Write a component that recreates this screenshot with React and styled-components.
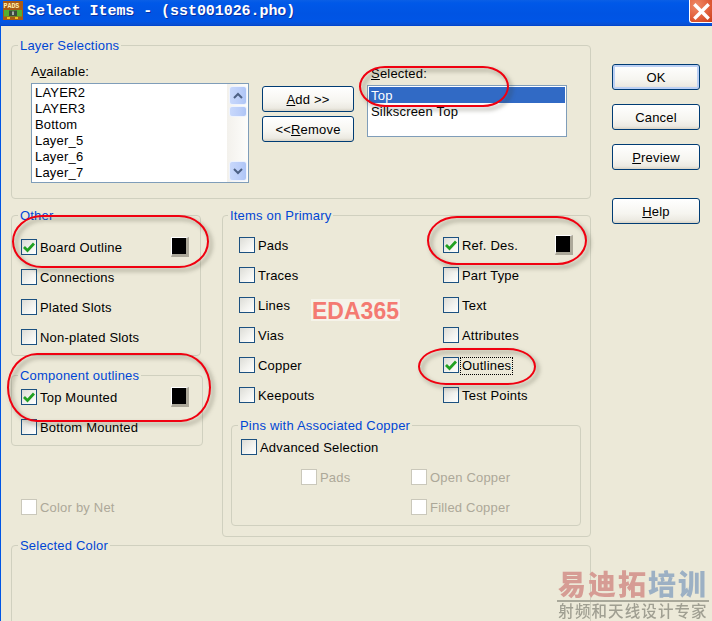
import React from "react";
import styled, { createGlobalStyle } from "styled-components";

const Global = createGlobalStyle`
  html, body { margin: 0; padding: 0; background: #ECE9D8; }
  body { font-family: "Liberation Sans", Tahoma, sans-serif; font-size: 13px; letter-spacing: 0.2px; color: #000; }
`;

const Page = styled.div`
  position: relative;
  width: 712px;
  height: 621px;
  overflow: hidden;
  background: #ECE9D8;
`;

const TitleBar = styled.div`
  display: flex;
  align-items: flex-start;
  height: 26px;
  box-sizing: border-box;
  padding-left: 3px;
  border-bottom: 1px solid #0046D0;
  background: linear-gradient(180deg, #0A5FE6 0%, #0058E8 12%, #0054E3 55%, #0055E6 85%, #0A4FD0 100%);
`;

const AppIcon = styled.svg`
  width: 20px;
  height: 19px;
  margin-top: 1px;
  flex: none;
`;

const TitleText = styled.div`
  margin: 3px 0 0 4px;
  font-family: "Liberation Mono", "Courier New", monospace;
  font-weight: 700;
  font-size: 15px;
  letter-spacing: -0.06px;
  line-height: 17px;
  color: #fff;
  white-space: pre;
  text-shadow: 1px 1px 0 #0A2FA0;
`;

const CloseButton = styled.div`
  margin-left: auto;
  width: 23px;
  height: 23px;
  box-sizing: border-box;
  border: 1px solid #fff;
  border-top: 0;
  border-right: 0;
  border-radius: 0 0 0 3px;
  background: radial-gradient(circle at 30% 25%, #EE8A68 0%, #E2603C 55%, #C83C18 100%);
  display: flex;
  align-items: center;
  justify-content: center;
`;

const Body = styled.div`
  display: flex;
  gap: 21px;
  box-sizing: border-box;
  height: 595px;
  padding: 19px 0 0 10px;
  border-left: 1px solid #0055E5;
`;

const MainColumn = styled.div`
  width: 580px;
  flex: none;
`;

const Group = styled.div`
  position: relative;
  box-sizing: border-box;
  width: ${(p) => p.$width || "auto"};
  height: ${(p) => p.$height || "auto"};
  margin-top: ${(p) => p.$top || 0};
  padding: ${(p) => p.$padding || 0};
  border: 1px solid #D0D0BF;
  border-radius: 4px;
`;

const Legend = styled.div`
  position: absolute;
  top: -7px;
  left: ${(p) => p.$left || "6px"};
  padding: 0 2px;
  background: #ECE9D8;
  color: #0046D5;
  line-height: 14px;
  white-space: nowrap;
`;

const LayerRow = styled.div`
  display: flex;
  align-items: flex-start;
`;

const FieldColumn = styled.div`
  display: flex;
  flex-direction: column;
  margin: ${(p) => p.$margin || 0};
`;

const FieldLabel = styled.div`
  line-height: 14px;
  margin: 1px 0 4px;
  padding-left: ${(p) => p.$indent || 0};
`;

const ListBox = styled.div`
  display: flex;
  box-sizing: border-box;
  width: ${(p) => p.$width};
  height: ${(p) => p.$height};
  border: 1px solid #7F9DB9;
  background: #fff;
`;

const ListItems = styled.div`
  flex: 1;
  padding: ${(p) => p.$padding || 0};
`;

const ListItem = styled.div`
  height: 16px;
  line-height: 18px;
  padding-left: ${(p) => p.$indent || "3px"};
  background: ${(p) => (p.$selected ? "#316AC5" : "transparent")};
  color: ${(p) => (p.$selected ? "#fff" : "#000")};
  white-space: nowrap;
`;

const ScrollTrack = styled.div`
  display: flex;
  flex-direction: column;
  align-items: center;
  width: 21px;
  padding: 2px 0 1px;
  box-sizing: border-box;
  background: linear-gradient(90deg, #F3F1EC 0%, #FDFDFB 100%);
`;

const ScrollPart = styled.div`
  display: flex;
  align-items: center;
  justify-content: center;
  width: 18px;
  height: ${(p) => p.$height};
  margin-top: ${(p) => p.$top || 0};
  box-sizing: border-box;
  border: 1px solid #EEF3FE;
  border-radius: 3px;
  background: linear-gradient(90deg, #C8D8FB 0%, #BBCEF9 60%, #AEC5F6 100%);
`;

const PushColumn = styled.div`
  display: flex;
  flex-direction: column;
  gap: 4px;
  margin: 22px 0 0 13px;
`;

const PushButton = styled.div`
  display: flex;
  align-items: center;
  justify-content: center;
  box-sizing: border-box;
  width: ${(p) => p.$width || "88px"};
  height: 26px;
  margin-top: ${(p) => p.$top || 0};
  padding-top: 2px;
  border: 1px solid #003C74;
  border-radius: 3px;
  background: linear-gradient(180deg, #FFFFFF 0%, #F6F5F0 60%, #ECEAE2 88%, #D8D3C6 100%);
  box-shadow: ${(p) => (p.$default ? "inset 0 0 0 2px #BCD0F4" : "none")};
  white-space: pre;
  line-height: 14px;
`;

const ActionColumn = styled.div`
  display: flex;
  flex-direction: column;
  width: 88px;
  padding-top: 19px;
  gap: 14px;
`;

const PanelsRow = styled.div`
  display: flex;
  margin-top: 16px;
`;

const LeftPanels = styled.div`
  width: 211px;
  flex: none;
`;

const CheckStack = styled.div`
  display: flex;
  flex-direction: column;
  gap: 14px;
`;

const CheckGrid = styled.div`
  display: grid;
  grid-template-columns: ${(p) => p.$columns};
  row-gap: 14px;
  margin: ${(p) => p.$margin || 0};
`;

const Row = styled.div`
  display: flex;
  align-items: center;
  height: 16px;
  padding-left: ${(p) => p.$indent || 0};
  margin-top: ${(p) => p.$top || 0};
`;

const Box = styled.div`
  display: flex;
  flex: none;
  align-items: center;
  justify-content: center;
  box-sizing: border-box;
  width: 16px;
  height: 16px;
  border: 1px solid ${(p) => (p.$disabled ? "#CAC8BB" : "#1C5180")};
  background: ${(p) =>
    p.$disabled ? "#fff" : "linear-gradient(135deg, #DCDCD7 0%, #F2F2EE 55%, #FFFFFF 100%)"};
`;

const Label = styled.span`
  margin: 2px 0 0 3px;
  line-height: 14px;
  white-space: nowrap;
  color: ${(p) => (p.$disabled ? "#ACA899" : "#000")};
  outline: ${(p) => (p.$focus ? "1px dotted #000" : "none")};
  outline-offset: 1px;
`;

const Swatch = styled.div`
  flex: none;
  box-sizing: border-box;
  width: 18px;
  height: 20px;
  margin-left: auto;
  background: #000;
  border-style: solid;
  border-width: 1px 3px 3px 1px;
  border-color: #fff #ACA899 #ACA899 #fff;
`;

const Highlight = styled.div`
  position: absolute;
  left: ${(p) => p.$x}px;
  top: ${(p) => p.$y}px;
  width: ${(p) => p.$w}px;
  height: ${(p) => p.$h}px;
  box-sizing: border-box;
  border: 2px solid #F00010;
  border-radius: ${(p) => p.$radius};
  filter: drop-shadow(3px 3px 2px rgba(60, 60, 40, 0.5));
  pointer-events: none;
`;

const Stamp = styled.div`
  position: absolute;
  left: 311px;
  top: 299px;
  width: 89px;
  height: 22px;
  background: #F5F3E9;
  color: #F47A72;
  font-weight: 700;
  font-size: 23px;
  letter-spacing: 0;
  line-height: 24px;
  text-align: center;
  white-space: nowrap;
`;

const Watermark = styled.div`
  position: absolute;
  left: 557px;
  top: 566px;
  width: 152px;
  font-family: "Noto Sans CJK SC", sans-serif;
  letter-spacing: 0;
  text-align: center;
  filter: blur(0.4px);
`;

const MarkTitle = styled.div`
  font-size: 28px;
  letter-spacing: 2px;
  line-height: 34px;
  height: 34px;
  font-weight: 900;
  white-space: nowrap;
  color: #D69C94;
`;

const MarkBlue = styled.span`
  color: #9CB0C4;
`;

const MarkSub = styled.div`
  border-top: 2px solid #A9A89A;
  font-size: 15.5px;
  letter-spacing: 1.1px;
  line-height: 16px;
  font-weight: 500;
  color: #A09F92;
  white-space: nowrap;
`;

const Check = () => (
  <svg width="12" height="12" viewBox="0 0 12 12">
    <path d="M1 6 L4.5 9.5 L11 2.5" fill="none" stroke="#21A121" strokeWidth="2.8" />
  </svg>
);

const CheckItem = ({ checked, disabled, focus, swatch, indent, top, children }) => (
  <Row $indent={indent} $top={top}>
    <Box $disabled={disabled}>{checked && <Check />}</Box>
    <Label $disabled={disabled} $focus={focus}>{children}</Label>
    {swatch && <Swatch />}
  </Row>
);

const Chevron = ({ up }) => (
  <svg width="10" height="8" viewBox="0 0 10 8">
    <path d={up ? "M1 6 L5 2 L9 6" : "M1 2 L5 6 L9 2"} fill="none" stroke="#4D6185" strokeWidth="2" />
  </svg>
);

export default function App() {
  return (
    <Page>
      <Global />
      <TitleBar>
        <AppIcon viewBox="0 0 20 19">
          <rect width="20" height="19" fill="#A85A14" />
          <text x="0.5" y="7" fontFamily="Liberation Mono, monospace" fontWeight="700" fontSize="6.6" letterSpacing="0" fill="#FFF0B0">PADS</text>
          <rect x="1" y="9" width="18" height="6.5" fill="#55B030" />
          <rect x="6" y="9.5" width="8" height="5.5" fill="#3C4A40" />
          <rect x="9" y="10.5" width="2" height="3.5" fill="#A8B0A8" />
          <rect x="4" y="16" width="3" height="2" fill="#F0C020" />
          <rect x="12" y="16" width="3" height="2" fill="#F0C020" />
        </AppIcon>
        <TitleText>Select Items - (sst001026.pho)</TitleText>
        <CloseButton>
          <svg width="17" height="17" viewBox="0 0 17 17">
            <path d="M2.5 2.5 L14.5 14.5 M14.5 2.5 L2.5 14.5" stroke="#fff" strokeWidth="3.4" strokeLinecap="square" />
          </svg>
        </CloseButton>
      </TitleBar>

      <Body>
        <MainColumn>
          <Group $height="154px" $padding="18px 0 0 19px">
            <Legend>Layer Selections</Legend>
            <LayerRow>
              <FieldColumn>
                <FieldLabel>A<u>v</u>ailable:</FieldLabel>
                <ListBox $width="218px" $height="100px">
                  <ListItems>
                    {["LAYER2", "LAYER3", "Bottom", "Layer_5", "Layer_6", "Layer_7"].map((n) => (
                      <ListItem key={n}>{n}</ListItem>
                    ))}
                  </ListItems>
                  <ScrollTrack>
                    <ScrollPart $height="19px"><Chevron up /></ScrollPart>
                    <ScrollPart $height="11px" $top="1px" />
                    <ScrollPart $height="20px" $top="auto"><Chevron /></ScrollPart>
                  </ScrollTrack>
                </ListBox>
              </FieldColumn>
              <PushColumn>
                <PushButton $width="92px"><span><u>A</u>dd &gt;&gt;</span></PushButton>
                <PushButton $width="92px"><span>&lt;&lt;<u>R</u>emove</span></PushButton>
              </PushColumn>
              <FieldColumn $margin="2px 0 0 13px">
                <FieldLabel $indent="4px"><u>S</u>elected:</FieldLabel>
                <ListBox $width="200px" $height="52px">
                  <ListItems $padding="1px">
                    <ListItem $selected $indent="2px">Top</ListItem>
                    <ListItem $indent="2px">Silkscreen Top</ListItem>
                  </ListItems>
                </ListBox>
              </FieldColumn>
            </LayerRow>
          </Group>

          <PanelsRow>
            <LeftPanels>
              <Group $width="190px" $padding="23px 11px 10px 9px">
                <Legend>Other</Legend>
                <CheckStack>
                  <CheckItem checked swatch>Board Outline</CheckItem>
                  <CheckItem>Connections</CheckItem>
                  <CheckItem>Plated Slots</CheckItem>
                  <CheckItem>Non-plated Slots</CheckItem>
                </CheckStack>
              </Group>
              <Group $width="192px" $top="19px" $padding="13px 13px 10px 9px">
                <Legend>Component outlines</Legend>
                <CheckStack>
                  <CheckItem checked swatch>Top Mounted</CheckItem>
                  <CheckItem>Bottom Mounted</CheckItem>
                </CheckStack>
              </Group>
              <CheckItem disabled indent="10px" top="53px">Color by Net</CheckItem>
            </LeftPanels>

            <Group $width="369px" $padding="21px 9px 10px 8px">
              <Legend $left="5px">Items on Primary</Legend>
              <CheckGrid $columns="204px 130px" $margin="0 0 0 8px">
                <CheckItem>Pads</CheckItem>
                <CheckItem checked swatch>Ref. Des.</CheckItem>
                <CheckItem>Traces</CheckItem>
                <CheckItem>Part Type</CheckItem>
                <CheckItem>Lines</CheckItem>
                <CheckItem>Text</CheckItem>
                <CheckItem>Vias</CheckItem>
                <CheckItem>Attributes</CheckItem>
                <CheckItem>Copper</CheckItem>
                <CheckItem checked focus>Outlines</CheckItem>
                <CheckItem>Keepouts</CheckItem>
                <CheckItem>Test Points</CheckItem>
              </CheckGrid>
              <Group $top="22px" $padding="13px 9px 10px 9px">
                <Legend>Pins with Associated Copper</Legend>
                <CheckItem>Advanced Selection</CheckItem>
                <CheckGrid $columns="110px 1fr" $margin="14px 0 0 60px">
                  <CheckItem disabled>Pads</CheckItem>
                  <CheckItem disabled>Open Copper</CheckItem>
                  <span />
                  <CheckItem disabled>Filled Copper</CheckItem>
                </CheckGrid>
              </Group>
            </Group>
          </PanelsRow>

          <Group $height="120px" $top="8px">
            <Legend>Selected Color</Legend>
          </Group>
        </MainColumn>

        <ActionColumn>
          <PushButton $default>OK</PushButton>
          <PushButton>Cancel</PushButton>
          <PushButton><span><u>P</u>review</span></PushButton>
          <PushButton $top="14px"><span><u>H</u>elp</span></PushButton>
        </ActionColumn>
      </Body>

      <Highlight $x={359} $y={66} $w={150} $h={41} $radius="26px / 50%" />
      <Highlight $x={12} $y={215} $w={197} $h={53} $radius="30px / 50%" />
      <Highlight $x={7} $y={353} $w={204} $h={69} $radius="30px / 50%" />
      <Highlight $x={427} $y={216} $w={160} $h={49} $radius="30px / 50%" />
      <Highlight $x={418} $y={348} $w={118} $h={37} $radius="28px / 50%" />

      <Stamp>EDA365</Stamp>
      <Watermark>
        <MarkTitle>易迪拓<MarkBlue>培训</MarkBlue></MarkTitle>
        <MarkSub>射频和天线设计专家</MarkSub>
      </Watermark>
    </Page>
  );
}
